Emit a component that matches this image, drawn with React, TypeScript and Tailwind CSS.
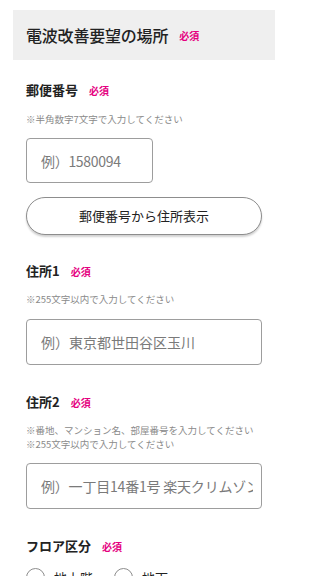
import React from 'react';

const font = { fontFamily: '"Noto Sans CJK JP", "Noto Sans", sans-serif' };

const Required: React.FC = () => (
  <span className="ml-[11px] text-[10px] font-bold text-[#e5007f]">必須</span>
);

const Label: React.FC<{ text: string; className?: string }> = ({ text, className }) => (
  <div className={`flex items-center h-5 ${className ?? ''}`}>
    <span className="text-[13px] font-bold text-[#222]">{text}</span>
    <Required />
  </div>
);

const Note: React.FC<{ lines: string[]; className?: string }> = ({ lines, className }) => (
  <div className={`text-[9.5px] leading-[14px] text-[#8a8a8a] ${className ?? ''}`}>
    {lines.map(l => (
      <div key={l}>{l}</div>
    ))}
  </div>
);

const TextInput: React.FC<{ placeholder: string; className?: string }> = ({ placeholder, className }) => (
  <input
    type="text"
    placeholder={placeholder}
    style={font}
    className={`h-[46px] rounded-[4px] border border-[#9d9d9d] bg-white pl-[14px] pr-[8px] text-[14px] text-[#222] outline-none placeholder:text-[#7a7a7a] ${className ?? ''}`}
  />
);

export default function App() {
  return (
    <div style={font} className="w-[288px] min-h-[576px] bg-white pt-[10px] overflow-hidden">
      <div className="mx-[13px] h-[50px] bg-[#efefef] flex items-center pl-[13px]">
        <span className="text-[16px] font-medium text-[#222] tracking-[-0.2px]">電波改善要望の場所</span>
        <Required />
      </div>

      <div className="px-[26px]">
        <Label text="郵便番号" className="mt-[20px]" />
        <Note lines={['※半角数字7文字で入力してください']} className="mt-[12px]" />
        <TextInput placeholder="例）1580094" className="mt-[12px] w-[127px] !h-[45px] tracking-[-0.3px]" />

        <button
          type="button"
          className="mt-[14px] w-full h-[38px] rounded-full border border-[#8d8d8d] bg-white text-[13px] text-[#222] shadow-[0_2px_2px_rgba(0,0,0,0.18)]"
          style={font}
        >
          郵便番号から住所表示
        </button>

        <Label text="住所1" className="mt-[26px]" />
        <Note lines={['※255文字以内で入力してください']} className="mt-[11px]" />
        <TextInput placeholder="例）東京都世田谷区玉川" className="mt-[13px] w-full" />

        <Label text="住所2" className="mt-[27px]" />
        <Note
          lines={['※番地、マンション名、部屋番号を入力してください', '※255文字以内で入力してください']}
          className="mt-[11px]"
        />
        <TextInput placeholder="例）一丁目14番1号 楽天クリムゾンハウス" className="mt-[12px] w-full tracking-[-0.2px]" />

        <Label text="フロア区分" className="mt-[27px]" />
        <div className="mt-[12px] flex items-center">
          <label className="flex items-center">
            <span className="w-[19px] h-[19px] rounded-full border border-[#8d8d8d] bg-white" />
            <span className="ml-[9px] text-[13px] text-[#222]">地上階</span>
          </label>
          <label className="flex items-center ml-[21px]">
            <span className="w-[19px] h-[19px] rounded-full border border-[#8d8d8d] bg-white" />
            <span className="ml-[9px] text-[13px] text-[#222]">地下</span>
          </label>
        </div>
      </div>
    </div>
  );
}
